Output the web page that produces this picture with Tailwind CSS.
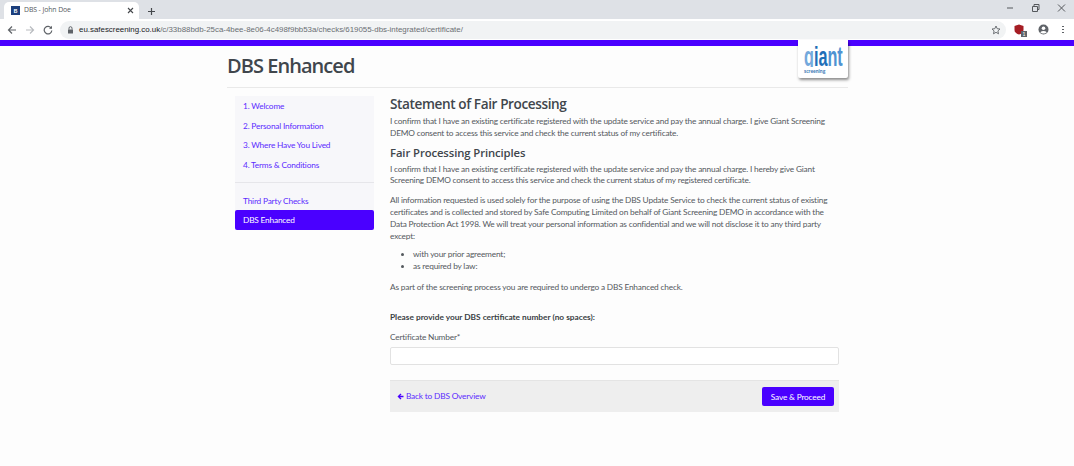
<!DOCTYPE html>
<html lang="en">
<head>
  <meta charset="UTF-8" />
  <title>DBS - John Doe</title>
  <script src="https://cdn.jsdelivr.net/npm/@tailwindcss/browser@4"></script>
</head>
<body class="bg-[#fdfdfd] font-['Lato',sans-serif] text-[#54595e] h-[466px] overflow-hidden">

  <!-- Tab strip -->
  <div class="h-[19px] bg-[#dee1e6] flex items-end pl-[4px] relative">
    <div class="w-[135px] h-[17px] bg-white rounded-t-[5px] flex items-center pl-[7px] pr-[5px]">
      <div class="w-[9px] h-[9px] bg-[#1c3f7c] text-white text-[6px] font-bold flex items-center justify-center">B</div>
      <span class="ml-[4px] text-[6.900px] text-[#555a60] font-['Open_Sans',sans-serif] tracking-[-0.1px]">DBS - John Doe</span>
      <svg class="ml-auto" width="7" height="7" viewBox="0 0 7 7"><path d="M1 1l5 5M6 1l-5 5" stroke="#45484c" stroke-width="1.1"/></svg>
    </div>
    <svg class="ml-[8px] mb-[3px]" width="9" height="9" viewBox="0 0 9 9"><path d="M4.500 1v7M1 4.500h7" stroke="#45484c" stroke-width="1.200"/></svg>
    <div class="ml-auto flex items-center gap-[17px] pr-[8px] self-start mt-[3px]">
      <svg width="8" height="10" viewBox="0 0 8 10"><path d="M1 5h6" stroke="#55585c"/></svg>
      <svg width="9" height="10" viewBox="0 0 9 10"><path d="M1.500 3.500h5v5h-5zM3 3.500V1.500h5v5H6.500" fill="none" stroke="#55585c"/></svg>
      <svg width="9" height="10" viewBox="0 0 9 10"><path d="M1 1.500l7 7M8 1.500l-7 7" stroke="#55585c"/></svg>
    </div>
  </div>

  <!-- Toolbar -->
  <div class="h-[21px] bg-white flex items-center pl-[7px] pr-[7px]">
    <svg width="10" height="10" viewBox="0 0 10 10"><path d="M9 5H1.500M5 1.500L1.500 5 5 8.500" fill="none" stroke="#5f6368" stroke-width="1.200"/></svg>
    <svg class="ml-[8px]" width="10" height="10" viewBox="0 0 10 10"><path d="M1 5h7.500M5 1.500L8.500 5 5 8.500" fill="none" stroke="#b9bcc0" stroke-width="1.200"/></svg>
    <svg class="ml-[8px]" width="10" height="10" viewBox="0 0 10 10"><path d="M8.300 3.200A3.800 3.800 0 1 0 8.800 5.500" fill="none" stroke="#5f6368" stroke-width="1.200"/><path d="M9 .8v3H6z" fill="#5f6368"/></svg>
    <div class="ml-[7px] w-[946px] h-[18px] bg-[#f1f3f4] rounded-full flex items-center pl-[7px] pr-[5px] shrink-0">
      <svg width="7" height="8" viewBox="0 0 7 8"><path d="M1 3.500h5v4H1z" fill="#5f6368"/><path d="M2 3.500V2.200a1.500 1.500 0 0 1 3 0v1.300" fill="none" stroke="#5f6368"/></svg>
      <span class="ml-[5px] text-[7.900px] whitespace-nowrap font-['Liberation_Sans',sans-serif] text-[#202124]">eu.safescreening.co.uk<span class="text-[#6a6e73]">/c/33b88bdb-25ca-4bee-8e06-4c498f9bb53a/checks/619055-dbs-integrated/certificate/</span></span>
      <svg class="ml-auto" width="10" height="10" viewBox="0 0 10 10"><path d="M5 1l1.200 2.700 2.800.3-2.100 1.900.6 2.900L5 7.300 2.500 8.800l.6-2.900L1 4l2.800-.3z" fill="none" stroke="#5f6368" stroke-width=".9"/></svg>
    </div>
    <div class="ml-[8px] w-[12px] h-[12px] relative shrink-0">
      <svg width="10" height="11" viewBox="0 0 10 11"><path d="M5 .5l4.500 1.500v4c0 2.500-2.500 4-4.500 4.500C3 10 .5 8.500.5 6V2z" fill="#a51d24"/></svg>
      <div class="absolute right-[-1px] bottom-[-1px] w-[6px] h-[6px] bg-[#5f6368] text-white text-[5px] leading-[6px] text-center">1</div>
    </div>
    <svg class="ml-[12px] shrink-0" width="11" height="11" viewBox="0 0 11 11"><circle cx="5.500" cy="5.500" r="5" fill="#5f6368"/><circle cx="5.500" cy="4.200" r="1.800" fill="#fff"/><path d="M2.200 8.200c1.800-1.600 4.800-1.600 6.600 0-1.800 1.700-4.800 1.700-6.600 0z" fill="#fff"/></svg>
    <div class="ml-[13px] flex flex-col gap-[1.500px] shrink-0">
      <div class="w-[1.500px] h-[1.500px] bg-[#5f6368]"></div>
      <div class="w-[1.500px] h-[1.500px] bg-[#5f6368]"></div>
      <div class="w-[1.500px] h-[1.500px] bg-[#5f6368]"></div>
    </div>
  </div>

  <!-- Purple bar -->
  <div class="h-[6px] bg-[#4a00ff]"></div>

  <div class="w-[621px] ml-[227px] relative">
    <!-- Logo -->
    <div class="absolute right-0 top-[-6px] w-[50px] h-[38px] bg-white rounded-b-[2px] shadow-[1px_2px_3px_rgba(0,0,0,0.45)] flex flex-col pt-[6px] pl-[6px]">
      <svg width="39" height="21" viewBox="0 0 39 21">
        <text transform="translate(0 20) scale(.58 1)" font-family="Liberation Sans" font-weight="700" font-size="28" fill="#74a9dc">g<tspan fill="#1f6fb8">ia</tspan><tspan fill="#4f93d2">nt</tspan></text>
      </svg>
      <div class="text-[5px] leading-[6px] mt-[1px] text-[#3a78b5] font-bold">screening</div>
    </div>

    <!-- Header -->
    <div class="h-[42px] border-b border-[#e9e9e9] flex items-center font-['Open_Sans',sans-serif]">
      <h1 class="text-[20px] font-semibold text-[#40464c] leading-none tracking-[-0.95px] mt-[-2px]">DBS Enhanced</h1>
    </div>

    <div class="flex mt-[8px]">
      <!-- Side nav -->
      <div class="w-[139px] ml-[8px] h-[134px] text-[8.300px] tracking-[-0.18px] text-[#5b2bff]">
        <div class="bg-[#f7f7fa] h-[134px] flex flex-col">
          <a class="h-[19.700px] flex items-center pl-[8px] pt-[1px]">1. Welcome</a>
          <a class="h-[19.700px] flex items-center pl-[8px] pt-[1px]">2. Personal Information</a>
          <a class="h-[19.700px] flex items-center pl-[8px] pt-[1px]">3. Where Have You Lived</a>
          <a class="h-[19.700px] flex items-center pl-[8px] pt-[1px]">4. Terms &amp; Conditions</a>
          <div class="border-b border-[#e6e6ea] mt-[8px] mb-[7.500px]"></div>
          <a class="h-[19.700px] flex items-center pl-[8px] pt-[1px]">Third Party Checks</a>
          <a class="h-[19.700px] flex items-center pl-[8px] pt-[1px] bg-[#4a00ff] text-white rounded-[2px]">DBS Enhanced</a>
        </div>
      </div>

      <!-- Main content -->
      <div class="w-[449px] ml-[16px] text-[8.300px] tracking-[-0.18px] leading-[11.800px]">
        <h2 class="text-[13.600px] font-semibold leading-[16px] text-[#40464c] font-['Open_Sans',sans-serif] tracking-[-0.4px]">Statement of Fair Processing</h2>
        <p class="mt-[4px]">I confirm that I have an existing certificate registered with the update service and pay the annual charge. I give Giant Screening DEMO consent to access this service and check the current status of my certificate.</p>
        <h3 class="text-[11.300px] font-semibold leading-[14px] mt-[6px] text-[#40464c] font-['Open_Sans',sans-serif] tracking-[-0.1px]">Fair Processing Principles</h3>
        <p class="mt-[4px]">I confirm that I have an existing certificate registered with the update service and pay the annual charge. I hereby give Giant Screening DEMO consent to access this service and check the current status of my registered certificate.</p>
        <p class="mt-[8px]">All information requested is used solely for the purpose of using the DBS Update Service to check the current status of existing certificates and is collected and stored by Safe Computing Limited on behalf of Giant Screening DEMO in accordance with the Data Protection Act 1998. We will treat your personal information as confidential and we will not disclose it to any third party except:</p>
        <ul class="list-disc pl-[23px] mt-[7px]">
          <li>with your prior agreement;</li>
          <li>as required by law:</li>
        </ul>
        <p class="mt-[9px]">As part of the screening process you are required to undergo a DBS Enhanced check.</p>
        <p class="mt-[18px] font-bold tracking-normal text-[#3a3f44]">Please provide your DBS certificate number (no spaces):</p>
        <label class="block mt-[8px]">Certificate Number*</label>
        <input type="text" class="block w-full h-[18px] mt-[4px] bg-white border border-[#e2e2e2] rounded-[2px]" />

        <!-- Footer actions -->
        <div class="mt-[15px] h-[32px] bg-[#eeeeee] border-t border-[#e4e4e4] flex items-center justify-between pl-[7px] pr-[5px]">
          <a class="flex items-center text-[#5b2bff]">
            <svg width="7" height="7" viewBox="0 0 7 7"><path d="M.5 3.500L3.500.5l1 1L3 2.800h3.500v1.400H3l1.500 1.300-1 1z" fill="#4a00ff"/></svg>
            <span class="ml-[2px]">Back to DBS Overview</span>
          </a>
          <button class="w-[72px] h-[19px] bg-[#4a00ff] text-white rounded-[2px] text-[8.300px] leading-none tracking-[-0.18px]">Save &amp; Proceed</button>
        </div>
      </div>
    </div>
  </div>
</body>
</html>
